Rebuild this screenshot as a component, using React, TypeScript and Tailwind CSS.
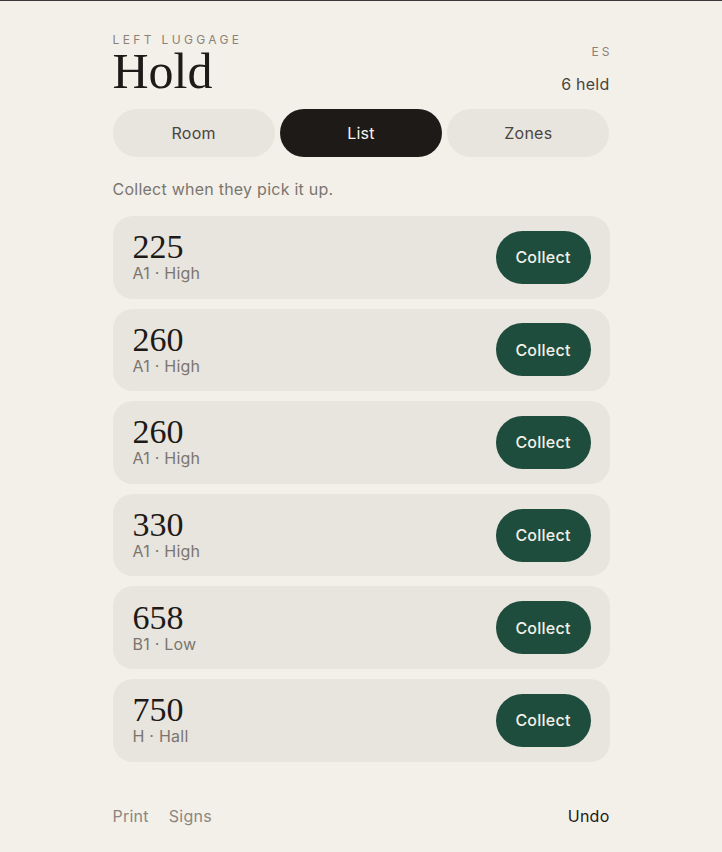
import React from "react";

const items = [
  { n: "225", sub: "A1 · High" },
  { n: "260", sub: "A1 · High" },
  { n: "260", sub: "A1 · High" },
  { n: "330", sub: "A1 · High" },
  { n: "658", sub: "B1 · Low" },
  { n: "750", sub: "H · Hall" },
];

const sans = { fontFamily: "Inter, 'Liberation Sans', sans-serif" };
const serif = { fontFamily: "'Liberation Serif', 'DejaVu Serif', serif" };

export default function App() {
  return (
    <div className="min-h-[852px] bg-[#f3f0ea] border-t border-[#3a3a3a] tracking-[0.015em]" style={sans}>
      <div className="w-[497px] mx-auto pt-[30px] pb-[24px]">
        <header className="flex justify-between items-end">
          <div className="flex flex-col">
            <div className="mt-px text-[12px] leading-4 tracking-[0.28em] text-[#8c8178]">LEFT LUGGAGE</div>
            <h1 className="text-[50px] leading-[47px] tracking-normal text-[#1d1a17]" style={serif}>Hold</h1>
          </div>
          <div className="flex flex-col items-end">
            <div className="text-[12px] leading-4 tracking-[0.25em] -mr-[3px] text-[#8c8178] mb-3">ES</div>
            <div className="text-[16px] leading-6 text-[#4a4540] -mb-px">6 held</div>
          </div>
        </header>

        <nav className="mt-[14px] grid grid-cols-3 gap-[5px]">
          <button className="h-12 rounded-full bg-[#e8e4de] text-[16px] text-[#4a4540]">Room</button>
          <button className="h-12 rounded-full bg-[#1e1a17] text-[16px] text-[#f7f4ee]">List</button>
          <button className="h-12 rounded-full bg-[#e8e4de] text-[16px] text-[#4a4540]">Zones</button>
        </nav>

        <p className="mt-5 text-[16px] leading-6 text-[#7a766f]">Collect when they pick it up.</p>

        <ul className="mt-[15px] flex flex-col gap-[10px]">
          {items.map((it, i) => (
            <li
              key={i}
              className="h-[82.6px] rounded-[20px] bg-[#e8e4de] flex items-center justify-between pl-5 pr-[19px]"
            >
              <div className="flex flex-col">
                <div className="text-[34px] leading-8 tracking-normal text-[#1d1a17]" style={serif}>{it.n}</div>
                <div className="text-[16px] leading-5 text-[#7a766f]">{it.sub}</div>
              </div>
              <button className="h-[53px] w-[95px] rounded-full bg-[#1e4d3d] text-[16px] font-medium text-[#f3f0ea]">
                Collect
              </button>
            </li>
          ))}
        </ul>

        <footer className="mt-[42px] flex justify-between items-center text-[16px] leading-6">
          <div className="flex gap-5 text-[#8d867e]">
            <span>Print</span>
            <span>Signs</span>
          </div>
          <span className="text-[#1d1a17]">Undo</span>
        </footer>
      </div>
    </div>
  );
}
